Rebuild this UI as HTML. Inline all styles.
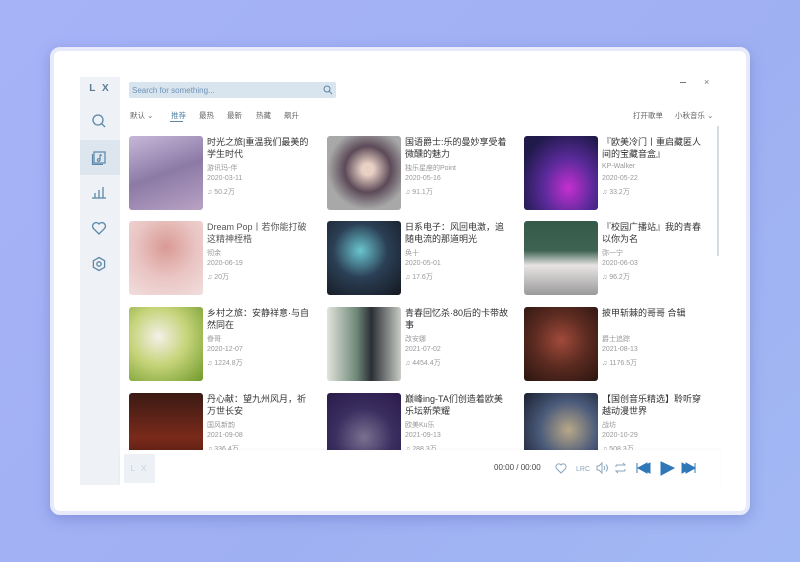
<!DOCTYPE html>
<html><head><meta charset="utf-8"><style>
*{margin:0;padding:0;box-sizing:border-box}
body{width:800px;height:562px;overflow:hidden;background:linear-gradient(135deg,#a7b3f7,#9fb0f2 60%,#a2b8f4);font-family:"Liberation Sans","Noto Sans CJK SC",sans-serif;position:relative}
.frame{position:absolute;left:50px;top:47px;width:700px;height:468px;border-radius:10px;background:#fff;border:4px solid #e6eafb;box-shadow:0 4px 14px rgba(80,90,180,.35)}
.side{position:absolute;left:80px;top:77px;width:40px;height:408px;background:#eef2f6}
.logo{position:absolute;left:0;top:6px;width:40px;text-align:center;font-size:10px;font-weight:bold;color:#5a7a94;letter-spacing:2px}
.act{position:absolute;left:0;top:63px;width:40px;height:35px;background:#dde6ee}
.ic{position:absolute;left:11px}
.main{position:absolute;left:120px;top:77px;width:600px;height:408px;background:#fff}
.search{position:absolute;left:129px;top:82px;width:207px;height:16px;background:#d8e4ee;border-radius:2px;font-size:8px;color:#6f93b8;padding:4px 0 0 3px}
.tabs{position:absolute;top:110px;font-size:7.5px;color:#666}
.tabs span{position:absolute;white-space:nowrap}
.card{position:absolute;width:195px;height:76px}
.img{position:absolute;left:0;top:0;width:74px;height:74px;border-radius:3px}
.t{position:absolute;left:78px;top:0;width:106px;font-size:9px;line-height:12px;color:#333}
.m{position:absolute;left:78px;font-size:7px;color:#999;white-space:nowrap}
.player{position:absolute;left:120px;top:450px;width:600px;height:35px;background:#fff;box-shadow:0 -1px 3px rgba(0,0,0,.04)}
.pl{position:absolute;left:4px;top:4px;width:31px;height:29px;background:#edf1f5;color:#c6d0d8;font-size:8px;text-align:center;line-height:29px;letter-spacing:2px}
.scroll{position:absolute;left:717px;top:126px;width:2px;height:130px;background:#d5dde3}
</style></head><body>
<div class="frame"></div>
<div class="main"></div>
<div class="side">
<div class="logo">L X</div>
<div class="act"></div>
<svg class="ic" style="top:36px" width="16" height="16" viewBox="0 0 16 16" fill="none" stroke="#5a86a8" stroke-width="1.3"><circle cx="7" cy="7" r="5"/><path d="M10.6 10.6 14 14"/></svg>
<svg class="ic" style="top:72px" width="16" height="16" viewBox="0 0 16 16" fill="none" stroke="#5a86a8" stroke-width="1.2"><rect x="3" y="3" width="11" height="11"/><path d="M1.5 5v10.5H12"/><path d="M9 5.5v5.5a1.3 1.3 0 1 1-1.3-1.3H9M9 5.5l2 1"/></svg>
<svg class="ic" style="top:107px" width="16" height="16" viewBox="0 0 16 16" fill="none" stroke="#5a86a8" stroke-width="1.3"><path d="M1 14h14M4 14V9M8 14V6M12 14V3"/></svg>
<svg class="ic" style="top:143px" width="16" height="16" viewBox="0 0 16 16" fill="none" stroke="#5a86a8" stroke-width="1.3"><path d="M8 14 2.3 8.3A3.2 3.2 0 0 1 8 4a3.2 3.2 0 0 1 5.7 4.3Z"/></svg>
<svg class="ic" style="top:179px" width="16" height="16" viewBox="0 0 16 16" fill="none" stroke="#5a86a8" stroke-width="1.3"><path d="M8 1.5 13.6 4.7v6.6L8 14.5 2.4 11.3V4.7Z"/><circle cx="8" cy="8" r="2.2"/></svg>
</div>
<div class="search">Search for something...</div>
<svg style="position:absolute;left:323px;top:85px" width="10" height="10" viewBox="0 0 10 10" fill="none" stroke="#5a86a8" stroke-width="1"><circle cx="4" cy="4" r="3"/><path d="M6.3 6.3 9 9"/></svg>
<div style="position:absolute;left:680px;top:82px;width:6px;border-top:1px solid #777"></div>
<div style="position:absolute;left:704px;top:77px;font-size:9px;color:#777">×</div>
<div class="tabs"><span style="left:130px">默认 ⌄</span><span style="left:171px;color:#5a86a8">推荐</span><span style="left:199px">最热</span><span style="left:227px">最新</span><span style="left:256px">热藏</span><span style="left:284px">飙升</span><span style="left:633px">打开歌单</span><span style="left:675px">小秋音乐 ⌄</span></div>
<div style="position:absolute;left:170px;top:121px;width:13px;height:1px;background:#5a86a8"></div>
<div class="scroll"></div>

<div class="card" style="left:129px;top:136px"><div class="img" style="background:linear-gradient(160deg,#c7b8d8,#8c7aa6 50%,#b9a3c4)"></div><div class="t">时光之旅|重温我们最美的学生时代</div><div class="m" style="top:27px">游讯玛-伴</div><div class="m" style="top:39px">2020-03-11</div><div class="m" style="top:51px">♫ 50.2万</div></div>
<div class="card" style="left:327px;top:136px"><div class="img" style="background:radial-gradient(circle at 55% 45%,#e8d0c4 10%,#5c4a58 40%,#a8a8a8 70%)"></div><div class="t">国语爵士:乐的曼妙享受着微醺的魅力</div><div class="m" style="top:27px">独乐星座的Point</div><div class="m" style="top:39px">2020-05-16</div><div class="m" style="top:51px">♫ 91.1万</div></div>
<div class="card" style="left:524px;top:136px"><div class="img" style="background:radial-gradient(ellipse at 60% 70%,#c52fd0,#5a2a9a 40%,#1f1a4a 80%)"></div><div class="t">『欧美冷门丨重启藏匿人间的宝藏音盒』</div><div class="m" style="top:27px">KP-Walker</div><div class="m" style="top:39px">2020-05-22</div><div class="m" style="top:51px">♫ 33.2万</div></div>

<div class="card" style="left:129px;top:221px"><div class="img" style="background:radial-gradient(circle at 50% 35%,#d99a94,#e9c4c2 50%,#f1dede)"></div><div class="t" style="color:#555">Dream Pop丨若你能打破这精神桎梏</div><div class="m" style="top:27px">彻余</div><div class="m" style="top:39px">2020-06-19</div><div class="m" style="top:51px">♫ 20万</div></div>
<div class="card" style="left:327px;top:221px"><div class="img" style="background:radial-gradient(circle at 45% 40%,#6ac5cf,#2b3f55 45%,#141820)"></div><div class="t">日系电子：风回电激，追随电流的那道明光</div><div class="m" style="top:27px">奂十</div><div class="m" style="top:39px">2020-05-01</div><div class="m" style="top:51px">♫ 17.6万</div></div>
<div class="card" style="left:524px;top:221px"><div class="img" style="background:linear-gradient(180deg,#355a4a 0,#3f6352 40%,#e8e4e4 60%,#9a9a9a)"></div><div class="t">『校园广播站』我的青春以你为名</div><div class="m" style="top:27px">弥一宁</div><div class="m" style="top:39px">2020-06-03</div><div class="m" style="top:51px">♫ 96.2万</div></div>

<div class="card" style="left:129px;top:307px"><div class="img" style="background:radial-gradient(circle at 40% 40%,#f4f0e8,#c6d47a 45%,#6f9a2a)"></div><div class="t">乡村之旅：安静祥意·与自然同在</div><div class="m" style="top:27px">眷哥</div><div class="m" style="top:39px">2020-12-07</div><div class="m" style="top:51px">♫ 1224.8万</div></div>
<div class="card" style="left:327px;top:307px"><div class="img" style="background:linear-gradient(90deg,#e2e4dc,#6f8878 40%,#2a2f35 60%,#c9ccc4)"></div><div class="t">青春回忆杀·80后的卡带故事</div><div class="m" style="top:27px">改安娜</div><div class="m" style="top:39px">2021-07-02</div><div class="m" style="top:51px">♫ 4454.4万</div></div>
<div class="card" style="left:524px;top:307px"><div class="img" style="background:radial-gradient(circle at 50% 45%,#a04a3a,#5a2a20 50%,#2a1510)"></div><div class="t">披甲斩棘的哥哥 合辑</div><div class="m" style="top:27px">爵士追踪</div><div class="m" style="top:39px">2021-08-13</div><div class="m" style="top:51px">♫ 1176.5万</div></div>

<div class="card" style="left:129px;top:393px;height:57px;overflow:hidden"><div class="img" style="background:linear-gradient(180deg,#3a1a14,#7a2a1a 60%,#4a1a10)"></div><div class="t">丹心献：望九州风月，祈万世长安</div><div class="m" style="top:27px">国风新韵</div><div class="m" style="top:39px">2021-09-08</div><div class="m" style="top:51px">♫ 336.4万</div></div>
<div class="card" style="left:327px;top:393px;height:57px;overflow:hidden"><div class="img" style="background:radial-gradient(circle at 50% 60%,#7a7090,#3a2f60 50%,#2a1a4a)"></div><div class="t">巅峰ing-TA们创造着欧美乐坛新荣耀</div><div class="m" style="top:27px">欧美Ku乐</div><div class="m" style="top:39px">2021-09-13</div><div class="m" style="top:51px">♫ 288.3万</div></div>
<div class="card" style="left:524px;top:393px;height:57px;overflow:hidden"><div class="img" style="background:radial-gradient(circle at 60% 50%,#b8a888,#4a5a7a 50%,#1a2030)"></div><div class="t">【国创音乐精选】聆听穿越动漫世界</div><div class="m" style="top:27px">战坊</div><div class="m" style="top:39px">2020-10-29</div><div class="m" style="top:51px">♫ 508.3万</div></div>

<div class="player"><div class="pl">L X</div>
<div style="position:absolute;left:374px;top:13px;font-size:8px;color:#444">00:00 / 00:00</div>
<svg style="position:absolute;left:434px;top:10px" width="160" height="16" viewBox="0 0 160 16" fill="none" stroke="#8aa6be" stroke-width="1">
<path d="M7 13 2.5 8.5A2.5 2.5 0 0 1 7 5a2.5 2.5 0 0 1 4.5 3.5Z"/>
<text x="22" y="11" font-size="7" fill="#8aa6be" stroke="none" font-family="Liberation Sans">LRC</text>
<path d="M43 6h2l3-3v10l-3-3h-2ZM50 6q1.5 2 0 4M52 4.5q3 3.5 0 7"/>
<path d="M62 5h9l-2-2M71 11h-9l2 2M62 5v2M71 11V9"/>
<path d="M83 3v10M96 3l-9 5 9 5ZM93 3l-9 5 9 5Z" fill="#2f78b8" stroke="#2f78b8"/>
<path d="M107 2l13 6-13 7Z" fill="#2f78b8" stroke="#2f78b8"/>
<path d="M141 3v10M128 3l9 5-9 5ZM132 3l9 5-9 5Z" fill="#2f78b8" stroke="#2f78b8"/>
</svg>
</div>
</body></html>
